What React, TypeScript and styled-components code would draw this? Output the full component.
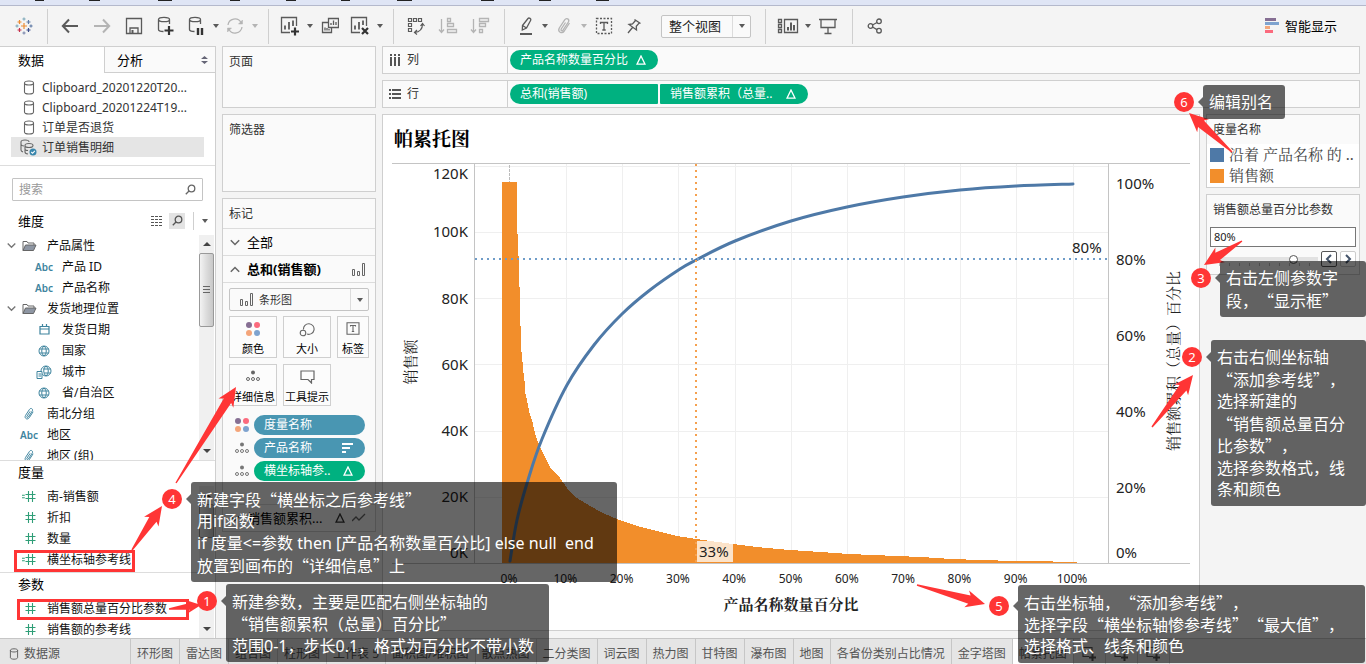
import React from "react";
import styled, { createGlobalStyle, css } from "styled-components";

const UI = `"Noto Sans", "Noto Sans CJK SC", sans-serif`;
const CJK = `"Noto Sans CJK SC", sans-serif`;
const SONG = `"Noto Sans", "Noto Serif CJK SC", "Noto Sans CJK SC", serif`;
const LINE = "#cfcfcf";
const TEAL = "#4996b2";
const GREEN = "#00b180";
const RED = "#ff3535";

const Global = createGlobalStyle`
  *, *::before, *::after { box-sizing: border-box; }
  body { margin: 0; background: #f4f4f4; color: #222; font: 12px/20px ${UI}; text-spacing-trim: space-all; }
  button, input, select { font: inherit; color: inherit; margin: 0; }
  button { background: none; border: 0; padding: 0; }
  ul { list-style: none; margin: 0; padding: 0; }
  h1, h2, h3 { margin: 0; font-weight: 400; }
  svg { display: block; }
`;

const Page = styled.div`
  position: relative;
  display: flex;
  flex-direction: column;
  height: 100vh;
  min-width: 1200px;
  overflow: hidden;
`;

/* ---------- menu strip and toolbar ---------- */

const MenuStrip = styled.div`
  height: 6px;
  flex: none;
  background: #dfe5f5;
  border-bottom: 1px solid #b4b9cc;
`;

const Toolbar = styled.div`
  height: 40px;
  flex: none;
  display: flex;
  align-items: center;
  padding-right: 29px;
`;

const ToolGroup = styled.div<{ $end?: number; $last?: boolean }>`
  display: flex;
  align-items: center;
  height: 35px;
  padding: 0 ${(p) => p.$end ?? 8}px 0 6px;
  border-right: ${(p) => (p.$last ? "0" : `1px solid ${LINE}`)};
`;

const Tool = styled.button<{ $w?: number; $dim?: boolean }>`
  width: ${(p) => p.$w ?? 30}px;
  height: 30px;
  display: flex;
  align-items: center;
  justify-content: center;
  color: ${(p) => (p.$dim ? "#b4b4b4" : "#5a5a5a")};
`;

const Caret = styled.span<{ $dim?: boolean }>`
  border: 3px solid transparent;
  border-top: 4px solid ${(p) => (p.$dim ? "#b4b4b4" : "#5a5a5a")};
  border-bottom: 0;
`;

const SmartButton = styled.button`
  margin-left: auto;
  display: flex;
  align-items: center;
  gap: 6px;
  font-size: 13px;
  color: #000;
`;

const SelectWrap = styled.div<{ $w?: number; $ml?: number }>`
  position: relative;
  width: ${(p) => (p.$w ? `${p.$w}px` : "100%")};
  margin-left: ${(p) => p.$ml ?? 0}px;
`;

const Select = styled.select<{ $size: number; $pad: number }>`
  appearance: none;
  width: 100%;
  height: 23px;
  padding: 0 22px 0 ${(p) => p.$pad}px;
  border: 1px solid #c4c4c4;
  border-radius: 2px;
  background: #fafafa;
  font-size: ${(p) => p.$size}px;
  line-height: 20px;
`;

const SelectArrow = styled.span`
  position: absolute;
  top: 1px;
  right: 1px;
  width: 18px;
  height: 21px;
  display: flex;
  align-items: center;
  justify-content: center;
  border-left: 1px solid #dcdcdc;
  pointer-events: none;
`;

const SelectIcon = styled.span`
  position: absolute;
  left: 11px;
  top: 5px;
  color: #666;
  pointer-events: none;
`;

/* ---------- workspace ---------- */

const Workspace = styled.main`
  flex: 1;
  min-height: 0;
  display: grid;
  grid-template-columns: 216px 154px minmax(0, 1fr);
  column-gap: 6px;
  padding-right: 6px;
`;

const DataPane = styled.aside`
  display: flex;
  flex-direction: column;
  min-height: 0;
  background: #fff;
  border: 1px solid ${LINE};
  border-left: 0;
  border-bottom: 0;
  color: #111;
`;

const PaneTabs = styled.div`
  display: flex;
  flex: none;
  height: 26px;
`;

const PaneTab = styled.button<{ $on?: boolean }>`
  width: ${(p) => (p.$on ? "104px" : "auto")};
  flex: ${(p) => (p.$on ? "none" : "1")};
  display: flex;
  align-items: center;
  justify-content: space-between;
  padding: 0 7px 0 ${(p) => (p.$on ? 18 : 12)}px;
  font-size: 13px;
  color: #000;
  ${(p) =>
    !p.$on &&
    css`
      background: #fafafa;
      border-left: 1px solid ${LINE};
      border-bottom: 1px solid ${LINE};
    `}
`;

const Sources = styled.ul`
  flex: none;
  padding: 4px 11px 8px;
  border-bottom: 1px solid #ddd;
`;

const Source = styled.li<{ $on?: boolean }>`
  height: 20px;
  display: flex;
  align-items: center;
  padding-top: 1px;
  background: ${(p) => (p.$on ? "#e5e5e5" : "none")};
  color: #333;
`;

const SourceIcon = styled.span`
  width: 31px;
  display: flex;
  justify-content: center;
  padding: 0 5px 0 9px;
  color: #666;
`;

const SearchBox = styled.label`
  flex: none;
  display: flex;
  align-items: center;
  height: 23px;
  margin: 12px 12px 9px 12px;
  padding: 0 6px;
  border: 1px solid #c4c4c4;
  border-radius: 1px;
  color: #666;
`;

const SearchInput = styled.input`
  flex: 1;
  min-width: 0;
  border: 0;
  padding: 0;
  outline: 0;
  height: 20px;
  background: none;
  &::placeholder { color: #999; opacity: 1; }
`;

const PaneHead = styled.div`
  flex: none;
  display: flex;
  align-items: center;
  justify-content: space-between;
  height: 25px;
  padding: 0 7px 4px 18px;
`;

const PaneTitle = styled.h2`
  font-size: 13px;
  line-height: 20px;
  color: #000;
`;

const HeadTools = styled.div`
  display: flex;
  align-items: center;
  gap: 4px;
  color: #555;
`;

const HeadButton = styled.button<{ $on?: boolean }>`
  display: flex;
  align-items: center;
  justify-content: center;
  width: 16px;
  height: 16px;
  background: ${(p) => (p.$on ? "#e3e3e3" : "none")};
`;

const HeadRule = styled.span`
  width: 1px;
  height: 18px;
  background: ${LINE};
  margin: 0 4px;
`;

const FieldArea = styled.div<{ $h?: number }>`
  display: flex;
  flex: ${(p) => (p.$h ? "none" : "1")};
  height: ${(p) => (p.$h ? `${p.$h}px` : "auto")};
  min-height: 0;
  overflow: hidden;
`;

const Fields = styled.ul`
  flex: 1;
  min-width: 0;
`;

const Field = styled.li<{ $depth: number }>`
  height: 21px;
  display: flex;
  align-items: center;
  white-space: nowrap;
  padding-left: ${(p) => p.$depth * 15}px;
`;

const Twist = styled.span`
  width: 18px;
  padding-left: 7px;
  color: #777;
`;

const FieldIcon = styled.span<{ $c?: string }>`
  width: 29px;
  height: 20px;
  display: flex;
  align-items: center;
  justify-content: center;
  padding-right: 7px;
  color: ${(p) => p.$c ?? "#3e849e"};
  font-size: 10px;
  font-weight: 600;
`;

const Divider = styled.div`
  flex: none;
  height: 1px;
  background: #ddd;
`;

const ScrollTrack = styled.div`
  width: 15px;
  flex: none;
  margin-right: 1px;
  display: flex;
  flex-direction: column;
  align-items: center;
  background: #f0f0f0;
`;

const ScrollArrow = styled.span<{ $up?: boolean }>`
  margin: 7px 0;
  border: 4px solid transparent;
  ${(p) =>
    p.$up
      ? "border-bottom-color: #444; border-top: 0;"
      : "border-top-color: #444; border-bottom: 0; margin-top: auto;"}
`;

const ScrollThumb = styled.span<{ $h: number }>`
  width: 15px;
  height: ${(p) => p.$h}px;
  display: flex;
  flex-direction: column;
  justify-content: center;
  align-items: center;
  border: 1px solid #999;
  border-radius: 2px;
  background: linear-gradient(90deg, #f3f3f3, #dcdcdc 50%, #c8c8c8);
  &::before {
    content: "";
    width: 7px;
    height: 8px;
    background: repeating-linear-gradient(#666 0 1px, transparent 1px 3px);
  }
`;

/* ---------- cards column ---------- */

const Cards = styled.section`
  display: flex;
  flex-direction: column;
  gap: 6px;
  min-width: 0;
`;

const Card = styled.div<{ $h?: number }>`
  border: 1px solid ${LINE};
  background: #fafafa;
  min-height: ${(p) => p.$h ?? 0}px;
  color: #333;
`;

const CardTitle = styled.h3`
  display: block;
  padding: 5px 6px 4px;
  font-size: 12px;
  line-height: 20px;
`;

const LayerRow = styled.button<{ $bold?: boolean }>`
  width: 100%;
  height: 27px;
  display: flex;
  align-items: center;
  gap: 7px;
  padding: 0 9px 0 7px;
  border-top: 1px solid #dcdcdc;
  color: #000;
  font-size: 13px;
  font-weight: ${(p) => (p.$bold ? 700 : 400)};
  > svg { color: #666; }
  > span { margin-right: auto; white-space: nowrap; }
`;

const MarkBody = styled.div`
  padding: 5px 6px 20px;
  border-top: 1px solid #dcdcdc;
`;

const MarkGrid = styled.div`
  display: grid;
  grid-template-columns: 48px 48px 32px;
  gap: 6px;
  margin: 5px 0 9px;
`;

const MarkButton = styled.button`
  height: 42px;
  display: flex;
  flex-direction: column;
  align-items: center;
  justify-content: space-between;
  padding-top: 5px;
  border: 1px solid ${LINE};
  background: #fcfcfc;
  color: #000;
  font-size: 11px;
  line-height: 16px;
  white-space: nowrap;
  > svg { color: #666; }
`;

const PillRow = styled.div`
  display: flex;
  align-items: center;
  gap: 5px;
  padding: 0 4px 3px 6px;
  color: #777;
`;

const Pill = styled.div<{ $green?: boolean; $w?: number; $shape?: "left" | "right" }>`
  ${(p) => (p.$w ? `width: ${p.$w}px;` : "flex: 1;")}
  height: 20px;
  display: flex;
  align-items: center;
  justify-content: space-between;
  padding: 0 12px 0 10px;
  border-radius: ${(p) =>
    p.$shape === "left" ? "10px 1px 1px 10px" : p.$shape === "right" ? "1px 10px 10px 1px" : "10px"};
  background: ${(p) => (p.$green ? GREEN : TEAL)};
  color: #fff;
  white-space: nowrap;
`;

/* ---------- shelves and view ---------- */

const Stage = styled.section`
  display: flex;
  flex-direction: column;
  gap: 6px;
  min-width: 0;
  min-height: 0;
  padding-bottom: 7px;
`;

const Shelf = styled.div`
  flex: none;
  height: 28px;
  display: flex;
  align-items: center;
  gap: 2px;
  border: 1px solid ${LINE};
  background: #fafafa;
  color: #333;
`;

const ShelfLabel = styled.div`
  width: 125px;
  height: 100%;
  display: flex;
  align-items: center;
  gap: 6px;
  padding-left: 6px;
  border-right: 1px solid ${LINE};
  font-size: 12px;
  color: #333;
  > svg { color: #555; }
`;

const ViewRow = styled.div`
  flex: 1;
  min-height: 0;
  display: grid;
  grid-template-columns: minmax(0, 1fr) 154px;
  gap: 6px;
`;

const Viz = styled.div`
  border: 1px solid ${LINE};
  background: #fff;
  min-height: 0;
`;

const VizTitle = styled.h1`
  height: 43px;
  padding: 10px 11px 0;
  font: 700 19px/28px ${SONG};
  color: #000;
`;

const Chart = styled.svg`
  width: 100%;
  height: auto;
  font-family: ${UI};
  fill: #222;
`;

const AxisTitle = styled.text<{ $bold?: boolean }>`
  font: ${(p) => (p.$bold ? 700 : 400)} 15px ${SONG};
  text-anchor: middle;
`;

const SideColumn = styled.div`
  display: flex;
  flex-direction: column;
  gap: 6px;
`;

const LegendItems = styled.ul`
  background: #fff;
  padding-bottom: 1px;
`;

const LegendItem = styled.li<{ $c: string }>`
  height: 21px;
  display: flex;
  align-items: center;
  gap: 5px;
  padding-left: 3px;
  font: 15px/21px ${SONG};
  white-space: nowrap;
  color: #444;
  &::before {
    content: "";
    width: 14px;
    height: 14px;
    background: ${(p) => p.$c};
  }
`;

const ParamInput = styled.input`
  display: block;
  width: calc(100% - 6px);
  height: 20px;
  margin: 3px 3px 4px;
  padding: 0 3px;
  border: 1px solid #777;
  background: #fff;
  font-size: 11px;
  color: #222;
`;

const SliderRow = styled.div`
  display: flex;
  align-items: center;
  gap: 3px;
  padding: 0 3px 0 4px;
`;

const Slider = styled.input`
  appearance: none;
  flex: 1;
  min-width: 0;
  height: 14px;
  background:
    repeating-linear-gradient(90deg, #bbb 0 1px, transparent 1px 10px) 8px 11px / 100% 3px no-repeat,
    linear-gradient(#e2e2e2, #e2e2e2) 0 5px / 100% 4px no-repeat;
  &::-webkit-slider-thumb {
    appearance: none;
    width: 9px;
    height: 9px;
    border: 1px solid #555;
    border-radius: 50%;
    background: #fff;
  }
`;

const StepButton = styled.button<{ $strong?: boolean }>`
  width: 16px;
  height: 16px;
  display: flex;
  align-items: center;
  justify-content: center;
  border: 1px solid ${(p) => (p.$strong ? "#555" : "#ccc")};
  border-radius: 2px;
  background: #fff;
  color: #44546a;
`;

/* ---------- sheet tabs ---------- */

const SheetBar = styled.nav`
  flex: none;
  height: 26px;
  display: flex;
  border-top: 1px solid #c6c6c6;
  background: #e5e5e5;
`;

const SheetTab = styled.button<{ $on?: boolean; $w?: number; $icon?: boolean }>`
  flex: none;
  ${(p) => (p.$w ? `width: ${p.$w}px;` : "")}
  display: flex;
  align-items: center;
  justify-content: ${(p) => (p.$icon ? "center" : "flex-start")};
  gap: 5px;
  padding: 4px 6px 0;
  border-right: 1px solid #c6c6c6;
  background: ${(p) => (p.$on ? "#fff" : "none")};
  color: #555;
  white-space: nowrap;
  &:first-child { padding-left: 9px; }
`;

/* ---------- annotations laid over the page ---------- */

const Overlay = styled.svg`
  position: absolute;
  inset: 0;
  width: 100%;
  height: 100%;
  pointer-events: none;
`;

const Note = styled.div<{ $x: number; $y: number }>`
  position: absolute;
  left: ${(p) => p.$x}px;
  top: ${(p) => p.$y}px;
  display: flex;
  align-items: flex-start;
  gap: 9px;
`;

const NoteBadge = styled.span<{ $drop: number }>`
  width: 20px;
  height: 20px;
  margin-top: ${(p) => p.$drop}px;
  border-radius: 50%;
  background: ${RED};
  color: #fff;
  font-size: 13px;
  line-height: 20px;
  text-align: center;
`;

const NoteBox = styled.p<{ $w: number; $drop: number }>`
  position: relative;
  width: ${(p) => p.$w}px;
  margin: 0;
  padding: 6px 0 6px 6px;
  border-radius: 3px;
  background: rgba(0, 0, 0, 0.6);
  color: #fff;
  font-size: 16px;
  line-height: 22px;
  white-space: pre;
  &::before {
    content: "";
    position: absolute;
    right: 100%;
    top: ${(p) => p.$drop + 5}px;
    border: 5px solid transparent;
    border-right-color: rgba(0, 0, 0, 0.6);
    border-left: 0;
  }
`;

const NoteLine = styled.span`
  display: block;
  height: 22px;
`;

const FullWidth = styled.span`
  font-family: ${CJK};
`;

/* ---------- icons ---------- */

const Ico = ({ w = 18, h = w, children, sw = 1.3 }: { w?: number; h?: number; sw?: number; children: React.ReactNode }) => (
  <svg width={w} height={h} viewBox={`0 0 ${w} ${h}`} fill="none" stroke="currentColor" strokeWidth={sw} aria-hidden="true">
    {children}
  </svg>
);

const plusAt = (x: number, y: number, c: string, r: number) => (
  <path key={`${x}-${y}`} d={`M${x - r} ${y}h${2 * r}M${x} ${y - r}v${2 * r}`} stroke={c} />
);

const Logo = () => (
  <Ico w={18} sw={1.2}>
    {plusAt(9, 9, "#eb8b32", 3)}
    {plusAt(4.5, 5, "#eb8b32", 2)}
    {plusAt(13.5, 5, "#5f7aa5", 2)}
    {plusAt(4.5, 13, "#c5304b", 2)}
    {plusAt(13.5, 13, "#3a4c8b", 2)}
    {plusAt(9, 2, "#7faabb", 1.6)}
    {plusAt(9, 16, "#7b88ad", 1.6)}
    {plusAt(2, 9, "#7faabb", 1.6)}
    {plusAt(16, 9, "#5f7aa5", 1.6)}
  </Ico>
);
const Back = () => <Ico sw={2}><path d="M17 9H2M8 2.5 1.8 9 8 15.5" /></Ico>;
const Forward = () => <Ico sw={2}><path d="M1 9h15M10 2.5 16.2 9 10 15.5" /></Ico>;
const Save = () => <Ico><path d="M1.500 1.500h15v15h-15zM5 16v-5h8v5" /><path d="M6.500 13h2v3h-2z" fill="currentColor" stroke="none" /></Ico>;
const cyl = <path d="M1.500 3.500v10c0 1 2 2 5 2M12.500 8V3.500M1.500 3.500c0-1.200 2-2.200 5.500-2.200s5.500 1 5.500 2.200-2 2.200-5.500 2.200-5.500-1-5.500-2.200z" />;
const DbPlus = () => <Ico w={18} h={20}>{cyl}<path d="M7.500 14.500h9M12 10v9" stroke="#333" strokeWidth={2.2} /></Ico>;
const DbPause = () => <Ico w={18} h={20}>{cyl}<path d="M10 12v7M14 12v7" stroke="#333" strokeWidth={2.4} /></Ico>;
const Refresh = () => <Ico><path d="M2 8a7 7 0 0 1 13-2.500M16 10a7 7 0 0 1-13 2.500" /><path d="M16.500 3v4h-4zM1.500 15v-4h4z" fill="currentColor" strokeWidth={0.5} /></Ico>;
const ChartPlus = () => <Ico w={20} h={20}><path d="M10 16.500H1.500v-15h15V10" /><path d="M5 9.500v4M9 6v7.500M13 4.500V10" strokeWidth={1.8} /><path d="M11 15.500h8M15 11.500v8" stroke="#333" strokeWidth={2.2} /></Ico>;
const ChartX = () => <Ico w={20} h={20}><path d="M10 16.500H1.500v-15h15V10" /><path d="M5 9.500v4M9 6v7.500M13 4.500V9" strokeWidth={1.8} /><path d="m12 12 6 6M18 12l-6 6" stroke="#333" strokeWidth={2.2} /></Ico>;
const Duplicate = () => <Ico><path d="M7.500 1.500h10v9h-10zM7 5.500H1.500v10h9V11" /><path d="M10 8v-2M12.500 8V3.500M15 8V5M4 13.500v-3M6 13.500V11M8 13.500V12" /></Ico>;
const Swap = () => <Ico w={18} sw={1.2}><path d="M1.500 1.500h3v3h-3zM6.500 1.500h3v3h-3zM11.500 1.500h3v3h-3zM1.500 6.500h3v3h-3zM1.500 11.500h3v3h-3zM15.500 7c0 5-3 8-8 8.500M13.500 9l2-2.500 2 2.500M10 13l-2.500 2.500L10 17.500" /></Ico>;
const SortAsc = () => <Ico w={20} h={18}><path d="M3.500 2v13M1 12.500l2.500 3 2.500-3M9.500 1.500h3v3h-3zM9.500 6.500h6v3h-6zM9.500 12.500h9v3h-9z" /></Ico>;
const SortDesc = () => <Ico w={20} h={18}><path d="M3.500 2v13M1 12.500l2.500 3 2.500-3M9.500 1.500h9v3h-9zM9.500 6.500h6v3h-6zM9.500 12.500h3v3h-3z" /></Ico>;
const Pen = () => <Ico w={14} h={20}><path d="M3.500 9.500 9 2.500c1-1.200 3.500.3 2.700 1.800L7.500 12l-4.200 2zM3.500 9.500l4 2.500" /><path d="M1 18h12" strokeWidth={2} /></Ico>;
const Clip = ({ w = 16, h = 18 }: { w?: number; h?: number }) => (
  <svg width={w} height={h} viewBox="0 0 16 18" fill="none" stroke="currentColor" strokeWidth={1.3} aria-hidden="true">
    <path d="M9.500 5.500 5.200 12c-.8 1.500.9 2.500 1.800 1.200L12.400 5c1.500-2.800-2-4.700-3.700-2.200L3.300 11c-2 3.700 2.500 6.500 5 3L13.500 6" />
  </svg>
);
const TextBox = () => <Ico><path d="M1.500 1.500h15v15h-15z" strokeDasharray="2 1.500" /><path d="M5.500 7V5.500h7V7M9 5.500V13M7.300 13h3.400" /></Ico>;
const Pin = () => <Ico w={16} h={16}><path d="m8.500 1.500 6 4M9.500 2.500 6.500 6 3 6.500l7.500 5.500-.2-3.700 3-3.500M6.500 9.500 2 15" /></Ico>;
const CardsIcon = () => <Ico w={22} h={16}><path d="M1.500 1.500h3v3h-3zM1.500 6.500h3v3h-3zM1.500 11.500h3v3h-3zM7.500 1.500h13v13h-13z" /><path d="M11 12.500V9M14 12.500V4.500M17 12.500V7" strokeWidth={2} /></Ico>;
const Present = () => <Ico w={18}><path d="M0 2.500h18M2 2.500v8h14v-8M9 11v5M5.500 16.500h7" /></Ico>;
const Share = () => <Ico w={16}><circle cx="3.5" cy="8" r="2.300" /><circle cx="12" cy="3.300" r="2.300" /><circle cx="12" cy="12.700" r="2.300" /><path d="m5.500 7 4.500-2.500M5.500 9l4.500 2.600" /></Ico>;
const Smart = () => (
  <svg width="14" height="16" viewBox="0 0 14 16" aria-hidden="true">
    <path fill="#866f93" d="M0 0h11v3H0z" /><path fill="#7ea3cf" d="M0 4h14v3H0z" /><path fill="#f2a77c" d="M0 8h5v3H0z" /><path fill="#fb6a7d" d="M0 12h8v3H0z" />
  </svg>
);
const Cylinder = ({ small }: { small?: boolean }) => (
  <svg width={small ? 10 : 12} height={small ? 12 : 15} viewBox="0 0 12 15" fill="none" stroke="currentColor" strokeWidth="1.100" aria-hidden="true">
    <path d="M1.500 3v9c0 1 1.800 2 4.500 2s4.500-1 4.500-2V3M6 1C3.300 1 1.500 1.800 1.500 3S3.300 5 6 5s4.500-.8 4.500-2S8.700 1 6 1z" />
  </svg>
);
const CylinderLinked = () => (
  <Ico w={17} h={17} sw={1.1}>
    <path d="M3 13C1.500 12.500 1 12 1 11V3c0-1.200 1.500-2 4-2s4 .8 4 2M1 5.500C1.500 6.500 3 7 4 7M5 6.500c0-1.200 1.500-2 4-2s4 .8 4 2-1.500 2-4 2-4-.8-4-2zV13c0 1 1 1.700 3 2M5 10c0 1 1.500 1.500 3 1.500" />
    <circle cx="13" cy="13" r="3.500" fill="#3a87ad" stroke="none" />
    <path d="m11.300 13 1.300 1.300 2.200-2.400" stroke="#fff" />
  </Ico>
);
const Lens = () => <Ico w={11} h={11}><circle cx="6.5" cy="4.500" r="3.300" /><path d="M4 7 .8 10.200" /></Ico>;
const ListIcon = () => <Ico w={12} h={10} sw={1}><path d="M0 .5h12M0 3.500h12M0 6.500h12M0 9.500h12" strokeDasharray="3 1" /></Ico>;
const Chevron = ({ up, w = 10 }: { up?: boolean; w?: number }) => (
  <svg width={w} height={7} viewBox="0 0 10 7" fill="none" stroke="currentColor" strokeWidth="1.500" aria-hidden="true">
    <path d={up ? "M.8 5.800 5 1.500l4.200 4.300" : "M.8 1.200 5 5.500l4.200-4.300"} />
  </svg>
);
const Folder = () => <Ico w={15} h={12} sw={1}><path d="M1 10.500v-9h4l1 1.500h6V5" stroke="#666" /><path d="M1 10.500 3.500 5H14l-2.500 5.500z" fill="#8e96a3" stroke="#666" /></Ico>;
const Calendar = () => <Ico w={11} h={11} sw={1.2}><path d="M1 2.500h9v7.500H1zM1 5h9M3.500 0v3M7.500 0v3" /></Ico>;
const Globe = () => <Ico w={12} h={12} sw={1}><circle cx="6" cy="6" r="5" /><path d="M1.500 4h9M1.500 8h9M6 1c-3 2.500-3 7.500 0 10M6 1c3 2.500 3 7.500 0 10" /></Ico>;
const GlobeDoc = () => <Ico w={16} h={14} sw={1}><circle cx="10" cy="6" r="5" /><path d="M7 4h7.500M8 8h6.500M10 1c-3 2.500-3 7.500 0 10M10 1c3 2.500 3 7.500 0 10" /><path d="M1 6.500h5v7H1z" fill="#fff" /><path d="M2.500 9H5M2.500 11H5" /></Ico>;
const Hash = ({ calc }: { calc?: boolean }) => <Ico w={14} h={11} sw={1.1}><path d="M6.500 0v11M10.500 0v11M3.500 3.500h10M3.500 7.500h10" />{calc && <path d="M0 4.200h2.800M0 6.800h2.800" />}</Ico>;
const Bars = () => <Ico w={14} h={13} sw={1}><path d="M.5 6.500h2v6h-2zM5.500 8.500h2v4h-2zM10.500.5h2v12h-2z" /></Ico>;
const Dots = ({ s = 14 }: { s?: number }) => (
  <svg width={s} height={s} viewBox="0 0 14 14" aria-hidden="true">
    <circle cx="3" cy="3" r="3" fill="#866f93" /><circle cx="11" cy="3" r="3" fill="#fb6a7d" />
    <circle cx="3" cy="11" r="3" fill="#f4a57a" /><circle cx="11" cy="11" r="3" fill="#7ea3cf" />
  </svg>
);
const Detail = () => (
  <Ico w={14} h={12} sw={1}>
    <circle cx="7" cy="2.500" r="2" fill="currentColor" stroke="none" />
    <circle cx="2" cy="9" r="1.500" /><circle cx="7" cy="9" r="1.500" /><circle cx="12" cy="9" r="1.500" />
  </Ico>
);
const SizeIcon = () => <Ico w={16} h={15} sw={1.1}><path d="M4.500 7.500A5.300 5.300 0 1 1 8 12" /><circle cx="4" cy="11" r="2.800" /></Ico>;
const LabelIcon = () => <Ico w={14} h={13} sw={1.1}><path d="M1 .8h12v11.400H1zM4.500 4.500v-1h5v1M7 3.500V9.500M5.800 9.500h2.400" /></Ico>;
const Tooltip = () => <Ico w={15} h={14} sw={1.2}><path d="M1 1h13v8.500h-2.500V13L8 9.500H1z" /></Ico>;
const Delta = ({ c = "#fff" }: { c?: string }) => <Ico w={10} h={10}><path d="M5 1 9 9.200H1z" stroke={c} /></Ico>;
const SortMini = () => <Ico w={11} h={10} sw={2}><path d="M0 1h11M0 5h8M0 9h4" /></Ico>;
const LineMini = () => <Ico w={14} h={10}><path d="m0 8 4-4 3 3 6-6" /></Ico>;
const SheetPlus = () => <Ico w={15} h={15} sw={1.1}><path d="M7 10.500H1v-9h9V7" /><path d="M7 11.500h7M10.500 8v7" strokeWidth={2} /></Ico>;

/* ---------- chart ---------- */

const xAt = (pct: number) => 127 + pct * 5.63;
const yMoney = (k: number) => 405.5 - k * 3.3125;
const yShare = (pct: number) => 405.5 - pct * 3.8;

const curve: [number, number][] = [
  [127, 403], [134, 362], [145, 322], [159, 281], [184, 227], [211, 187], [239, 156], [267, 132],
  [297, 111], [313, 102], [352, 83], [408, 63], [464, 49], [520, 39], [577, 32], [633, 28], [690, 26],
];

const profile: [number, number][] = [
  [134, 24], [134.5, 76], [135.5, 98], [136.5, 129], [137.5, 168], [138.5, 194], [139.5, 204], [140.5, 215],
  [141.5, 223], [142.5, 236], [145, 247], [147, 257], [149, 262], [152, 275], [154, 282], [161, 297], [167, 309],
  [177, 320], [184, 330], [194, 340], [207, 348], [220, 355], [234, 361], [254, 368], [274, 373], [294, 378], [320, 382],
  [350, 386], [374, 389], [407, 392], [438, 394], [466, 396], [490, 397], [538, 399], [569, 401], [597, 402], [633, 403],
  [670, 403.5], [694, 404],
];

const smooth = (pts: [number, number][]) => {
  let d = `M${pts[0][0]} ${pts[0][1]}`;
  for (let i = 0; i < pts.length - 1; i++) {
    const a = pts[Math.max(0, i - 1)], b = pts[i], c = pts[i + 1], e = pts[Math.min(pts.length - 1, i + 2)];
    d += `C${b[0] + (c[0] - a[0]) / 6} ${b[1] + (c[1] - a[1]) / 6} ${c[0] - (e[0] - b[0]) / 6} ${c[1] - (e[1] - b[1]) / 6} ${c[0]} ${c[1]}`;
  }
  return d;
};

const barsPath = () => {
  let d = "M119 405.500V24H134";
  for (let x = 134; x < 694; x++) {
    const i = Math.max(1, profile.findIndex((p) => p[0] >= x + 0.5));
    const [x0, y0] = profile[i - 1];
    const [x1, y1] = profile[i];
    const y = y0 + ((y1 - y0) * (x + 0.5 - x0)) / (x1 - x0);
    d += `V${Math.round(y)}H${x + 1}`;
  }
  return d + "V405.500Z";
};

const ParetoChart = () => {
  const tens = [0, 10, 20, 30, 40, 50, 60, 70, 80, 90, 100];
  const money = [0, 20, 40, 60, 80, 100, 120];
  const share = [0, 20, 40, 60, 80, 100];
  return (
    <Chart viewBox="0 0 816 472" role="img" aria-label="帕累托图">
      <g stroke="#efefef" shapeRendering="crispEdges">
        {tens.slice(1).map((t) => <path key={t} d={`M${xAt(t)} 6V405`} />)}
        {money.map((m) => <path key={m} d={`M92 ${yMoney(m)}H725`} />)}
      </g>
      <path d="M126.500 7V24" stroke="#bbb" strokeDasharray="3 1" />
      <path d={barsPath()} fill="#f28e2b" />
      <path d={smooth(curve)} fill="none" stroke="#4e79a7" strokeWidth="3" strokeLinecap="round" />
      <path d="M92 101H724" stroke="#6f9cc8" strokeWidth="2" strokeDasharray="2 4" />
      <path d="M313 6V405" stroke="#f5a04e" strokeWidth="2" strokeDasharray="2 4" />
      <path d="M9 5.500H807M9 405.500H807M91.500 5V406M725.500 5V406" stroke="#c4c4c4" />
      <rect x="314" y="383" width="36" height="21" fill="#fff" fillOpacity="0.75" />
      <g fontSize="15">
        <text x="316" y="399">33%</text>
        <text x="689" y="95">80%</text>
        {money.map((m) => (
          <text key={m} x="85" y={m === 0 ? 400 : m === 120 ? 21 : yMoney(m) + 5} textAnchor="end">{m}K</text>
        ))}
        {share.map((s) => (
          <text key={s} x="733" y={s === 0 ? 400 : yShare(s) + 5}>{s}%</text>
        ))}
      </g>
      <g fontSize="12" textAnchor="middle">
        {tens.map((t) => <text key={t} x={xAt(t) - 1} y="425">{t}%</text>)}
      </g>
      <AxisTitle transform="translate(33 204) rotate(-90)">销售额</AxisTitle>
      <AxisTitle transform="translate(796 203) rotate(-90)">销售额累积（总量）百分比</AxisTitle>
      <AxisTitle $bold x="408" y="452">产品名称数量百分比</AxisTitle>
    </Chart>
  );
};

/* ---------- data ---------- */

type FieldRow = { depth: number; icon: React.ReactNode; text: string; open?: boolean; color?: string };

const dimensions: FieldRow[] = [
  { depth: 0, icon: <Folder />, text: "产品属性", open: true },
  { depth: 1, icon: "Abc", text: "产品 ID" },
  { depth: 1, icon: "Abc", text: "产品名称" },
  { depth: 0, icon: <Folder />, text: "发货地理位置", open: true },
  { depth: 1, icon: <Calendar />, text: "发货日期" },
  { depth: 1, icon: <Globe />, text: "国家" },
  { depth: 1, icon: <GlobeDoc />, text: "城市" },
  { depth: 1, icon: <Globe />, text: "省/自治区" },
  { depth: 0, icon: <Clip w={12} h={14} />, text: "南北分组" },
  { depth: 0, icon: "Abc", text: "地区" },
  { depth: 0, icon: <Clip w={12} h={14} />, text: "地区 (组)" },
];
const HASH = "#2f9e77";
const measures: FieldRow[] = [
  { depth: 0, icon: <Hash calc />, text: "南-销售额", color: HASH },
  { depth: 0, icon: <Hash />, text: "折扣", color: HASH },
  { depth: 0, icon: <Hash />, text: "数量", color: HASH },
  { depth: 0, icon: <Hash calc />, text: "横坐标轴参考线", color: HASH },
];
const parameters: FieldRow[] = [
  { depth: 0, icon: <Hash />, text: "销售额总量百分比参数", color: HASH },
  { depth: 0, icon: <Hash />, text: "销售额的参考线", color: HASH },
];

const FieldList = ({ rows }: { rows: FieldRow[] }) => (
  <Fields>
    {rows.map((r) => (
      <Field key={r.text} $depth={r.depth}>
        <Twist>{r.open && <Chevron w={9} />}</Twist>
        <FieldIcon $c={r.color}>{r.icon}</FieldIcon>
        {r.text}
      </Field>
    ))}
  </Fields>
);

const sheets = ["环形图", "雷达图", "组合图", "柱形图", "工作表 5", "面积图/堆积图", "散点热图", "二分类图", "词云图", "热力图", "甘特图", "瀑布图", "地图", "各省份类别占比情况", "金字塔图"];

const notes = [
  { n: 1, x: 197, y: 584, w: 323, drop: 7, lines: ["新建参数，主要是匹配右侧坐标轴的", "“销售额累积（总量）百分比”", "范围0-1，步长0.1，格式为百分比不带小数"] },
  { n: 4, x: 162, y: 482, w: 426, drop: 7, lines: ["新建字段“横坐标之后参考线”", "用if函数", "if 度量<=参数 then [产品名称数量百分比] else null  end", "放置到画布的“详细信息”上"] },
  { n: 2, x: 1182, y: 340, w: 155, drop: 7, lines: ["右击右侧坐标轴", "“添加参考线”，", "选择新建的", "“销售额总量百分", "比参数”，", "选择参数格式，线", "条和颜色"] },
  { n: 3, x: 1191, y: 261, w: 146, drop: 7, lines: ["右击左侧参数字", "段，“显示框”"] },
  { n: 5, x: 989, y: 585, w: 347, drop: 11, lines: ["右击坐标轴，“添加参考线”，", "选择字段“横坐标轴惨参考线”“最大值”，", "选择格式、线条和颜色"] },
  { n: 6, x: 1174, y: 85, w: 82, drop: 7, lines: ["编辑别名"] },
];

/* Tapered arrow from a sharp tail (x1, y1) to its tip (x2, y2). */
const Arrow = ({ x1, y1, x2, y2, head = 19 }: { x1: number; y1: number; x2: number; y2: number; head?: number }) => {
  const len = Math.hypot(x2 - x1, y2 - y1);
  const ux = (x2 - x1) / len, uy = (y2 - y1) / len;
  const at = (back: number, side: number) => `${x2 - ux * back - uy * side},${y2 - uy * back + ux * side}`;
  const half = head * 0.46;
  return (
    <polygon
      fill={RED}
      points={[at(0, 0), at(head, half), at(head * 0.85, half * 0.5), at(len, 0.7), at(len, -0.7), at(head * 0.85, -half * 0.5), at(head, -half)].join(" ")}
    />
  );
};

const withWideMarks = (line: string) =>
  line.split(/([“”，]+)/).map((part, i) => (i % 2 ? <FullWidth key={i}>{part}</FullWidth> : part));

const mnemonics = [[35, 9], [89, 11], [158, 14], [230, 10], [286, 10], [341, 9], [397, 15], [481, 13], [539, 12], [596, 13]];

export default function App() {
  return (
    <Page>
      <Global />
      <MenuStrip>
        <svg width="620" height="2" fill="#222" aria-hidden="true">
          {mnemonics.map(([x, w]) => <rect key={x} x={x} width={w} height="1" />)}
        </svg>
      </MenuStrip>

      <Toolbar>
        <ToolGroup $end={5}>
          <Tool $w={36} aria-label="起始页"><Logo /></Tool>
        </ToolGroup>
        <ToolGroup>
          <Tool $w={32} aria-label="后退"><Back /></Tool>
          <Tool $w={32} $dim aria-label="前进"><Forward /></Tool>
          <Tool $w={32} aria-label="保存"><Save /></Tool>
          <Tool $w={32} aria-label="新建数据源"><DbPlus /></Tool>
          <Tool aria-label="暂停自动更新"><DbPause /></Tool>
          <Tool $w={8} aria-label="更多更新选项"><Caret /></Tool>
          <Tool $dim aria-label="刷新"><Refresh /></Tool>
          <Tool $w={10} aria-label="更多刷新选项"><Caret $dim /></Tool>
        </ToolGroup>
        <ToolGroup>
          <Tool aria-label="新建工作表"><ChartPlus /></Tool>
          <Tool $w={10} aria-label="更多新建选项"><Caret /></Tool>
          <Tool aria-label="复制工作表"><Duplicate /></Tool>
          <Tool aria-label="清除工作表"><ChartX /></Tool>
          <Tool $w={10} aria-label="更多清除选项"><Caret /></Tool>
        </ToolGroup>
        <ToolGroup>
          <Tool $w={32} aria-label="交换行和列"><Swap /></Tool>
          <Tool $w={32} $dim aria-label="升序排序"><SortAsc /></Tool>
          <Tool $w={32} $dim aria-label="降序排序"><SortDesc /></Tool>
        </ToolGroup>
        <ToolGroup $end={14}>
          <Tool aria-label="突出显示"><Pen /></Tool>
          <Tool $w={8} aria-label="突出显示选项"><Caret /></Tool>
          <Tool $dim aria-label="分组"><Clip /></Tool>
          <Tool $w={10} aria-label="分组选项"><Caret $dim /></Tool>
          <Tool aria-label="显示标记标签"><TextBox /></Tool>
          <Tool aria-label="固定轴"><Pin /></Tool>
          <SelectWrap $w={90} $ml={12}>
            <Select aria-label="适合" $size={13} $pad={7}><option>整个视图</option></Select>
            <SelectArrow><Caret /></SelectArrow>
          </SelectWrap>
        </ToolGroup>
        <ToolGroup>
          <Tool $w={32} aria-label="显示卡片"><CardsIcon /></Tool>
          <Tool $w={8} aria-label="卡片选项"><Caret /></Tool>
          <Tool $w={32} aria-label="演示模式"><Present /></Tool>
        </ToolGroup>
        <ToolGroup $last>
          <Tool $w={32} aria-label="共享"><Share /></Tool>
        </ToolGroup>
        <SmartButton><Smart />智能显示</SmartButton>
      </Toolbar>

      <Workspace>
        <DataPane>
          <PaneTabs>
            <PaneTab $on>数据</PaneTab>
            <PaneTab>
              分析
              <svg width="7" height="8" fill="#667" aria-hidden="true"><path d="M3.500 0 7 3H0zM0 5h7L3.500 8z" /></svg>
            </PaneTab>
          </PaneTabs>
          <Sources>
            {["Clipboard_20201220T20...", "Clipboard_20201224T19...", "订单是否退货"].map((s) => (
              <Source key={s}><SourceIcon><Cylinder /></SourceIcon>{s}</Source>
            ))}
            <Source $on><SourceIcon><CylinderLinked /></SourceIcon>订单销售明细</Source>
          </Sources>
          <SearchBox>
            <SearchInput aria-label="搜索" placeholder="搜索" />
            <Lens />
          </SearchBox>
          <PaneHead>
            <PaneTitle>维度</PaneTitle>
            <HeadTools>
              <HeadButton aria-label="列表视图"><ListIcon /></HeadButton>
              <HeadButton $on aria-label="查找字段"><Lens /></HeadButton>
              <HeadRule />
              <Caret />
            </HeadTools>
          </PaneHead>
          <FieldArea $h={225}>
            <FieldList rows={dimensions} />
            <ScrollTrack><ScrollArrow $up /><ScrollThumb $h={74} /><ScrollArrow /></ScrollTrack>
          </FieldArea>
          <Divider />
          <PaneHead><PaneTitle>度量</PaneTitle></PaneHead>
          <FieldArea $h={86}>
            <FieldList rows={measures} />
            <ScrollTrack><ScrollArrow $up /><ScrollThumb $h={34} /><ScrollArrow /></ScrollTrack>
          </FieldArea>
          <Divider />
          <PaneHead><PaneTitle>参数</PaneTitle></PaneHead>
          <FieldArea>
            <FieldList rows={parameters} />
            <ScrollTrack><ScrollArrow /></ScrollTrack>
          </FieldArea>
        </DataPane>

        <Cards>
          <Card $h={62}><CardTitle>页面</CardTitle></Card>
          <Card $h={78}><CardTitle>筛选器</CardTitle></Card>
          <Card>
            <CardTitle>标记</CardTitle>
            <LayerRow><Chevron /><span>全部</span></LayerRow>
            <LayerRow $bold><Chevron up /><span>总和(销售额)</span><Bars /></LayerRow>
            <MarkBody>
              <SelectWrap>
                <Select aria-label="标记类型" $size={11} $pad={29}><option>条形图</option></Select>
                <SelectIcon><Bars /></SelectIcon>
                <SelectArrow><Caret /></SelectArrow>
              </SelectWrap>
              <MarkGrid>
                <MarkButton><Dots />颜色</MarkButton>
                <MarkButton><SizeIcon />大小</MarkButton>
                <MarkButton><LabelIcon />标签</MarkButton>
                <MarkButton><Detail />详细信息</MarkButton>
                <MarkButton><Tooltip />工具提示</MarkButton>
              </MarkGrid>
              <PillRow><Dots /><Pill>度量名称</Pill></PillRow>
              <PillRow><Detail /><Pill>产品名称<SortMini /></Pill></PillRow>
              <PillRow><Detail /><Pill $green>横坐标轴参..<Delta /></Pill></PillRow>
            </MarkBody>
            <LayerRow><Chevron /><span>销售额累积...</span><Delta c="#333" /><LineMini /></LayerRow>
          </Card>
        </Cards>

        <Stage>
          <Shelf>
            <ShelfLabel>
              <Ico w={12} h={12} sw={2}><path d="M2 0v12M6 0v12M10 0v12" strokeDasharray="2 1 20" /></Ico>列
            </ShelfLabel>
            <Pill $green $w={148}>产品名称数量百分比<Delta /></Pill>
          </Shelf>
          <Shelf>
            <ShelfLabel>
              <Ico w={12} h={12} sw={2}><path d="M0 2h12M0 6h12M0 10h12" strokeDasharray="2 1 20" /></Ico>行
            </ShelfLabel>
            <Pill $green $w={148} $shape="left">总和(销售额)</Pill>
            <Pill $green $w={148} $shape="right">销售额累积（总量..<Delta /></Pill>
          </Shelf>
          <ViewRow>
            <Viz>
              <VizTitle>帕累托图</VizTitle>
              <ParetoChart />
            </Viz>
            <SideColumn>
              <Card>
                <CardTitle>度量名称</CardTitle>
                <LegendItems>
                  <LegendItem $c="#4e79a7">沿着 产品名称 的 ..</LegendItem>
                  <LegendItem $c="#f28e2b">销售额</LegendItem>
                </LegendItems>
              </Card>
              <Card $h={81}>
                <CardTitle as="label" htmlFor="share-param">销售额总量百分比参数</CardTitle>
                <ParamInput id="share-param" defaultValue="80%" />
                <SliderRow>
                  <Slider type="range" min={0} max={100} defaultValue={80} aria-label="销售额总量百分比参数" />
                  <StepButton $strong aria-label="减小"><Ico w={8} h={10} sw={2}><path d="M6 1 2 5l4 4" /></Ico></StepButton>
                  <StepButton aria-label="增大"><Ico w={8} h={10} sw={2}><path d="m2 1 4 4-4 4" /></Ico></StepButton>
                </SliderRow>
              </Card>
            </SideColumn>
          </ViewRow>
        </Stage>
      </Workspace>

      <SheetBar>
        <SheetTab $w={131}><Cylinder small />数据源</SheetTab>
        {sheets.map((s) => <SheetTab key={s}>{s}</SheetTab>)}
        <SheetTab $on>帕累托图</SheetTab>
        {["新建工作表", "新建仪表板", "新建故事"].map((s) => (
          <SheetTab key={s} $w={32} $icon aria-label={s}><SheetPlus /></SheetTab>
        ))}
      </SheetBar>

      <Overlay aria-hidden="true">
        <g fill="none" stroke={RED} strokeWidth="3">
          <rect x="15.500" y="551.500" width="118" height="19" />
          <rect x="18.500" y="600.500" width="169" height="18" />
        </g>
        <Arrow x1={169} y1={609} x2={201} y2={605} head={14} />
        <Arrow x1={132} y1={550} x2={162} y2={506} />
        <Arrow x1={176} y1={483} x2={236} y2={387} />
        <Arrow x1={1232} y1={152} x2={1189} y2={113} />
        <Arrow x1={1242} y1={241} x2={1204} y2={265} />
        <Arrow x1={1152} y1={427} x2={1193} y2={375} />
        <Arrow x1={917} y1={585} x2={985} y2={604} />
      </Overlay>
      {notes.map((note) => (
        <Note key={note.n} $x={note.x} $y={note.y}>
          <NoteBadge $drop={note.drop}>{note.n}</NoteBadge>
          <NoteBox $w={note.w} $drop={note.drop}>
            {note.lines.map((l) => <NoteLine key={l}>{withWideMarks(l)}</NoteLine>)}
          </NoteBox>
        </Note>
      ))}
    </Page>
  );
}
